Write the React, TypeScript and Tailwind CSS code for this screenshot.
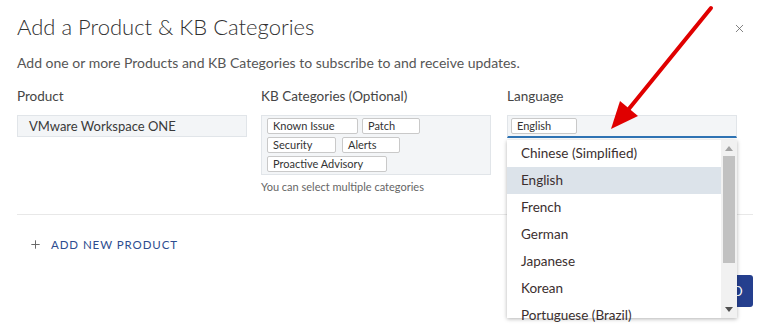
import { X, Plus } from 'lucide-react';

const categories = [
  ['Known Issue', 'w-[91px]'],
  ['Patch', 'w-[58px]'],
];

const languages = [
  'Chinese (Simplified)',
  'English',
  'French',
  'German',
  'Japanese',
  'Korean',
  'Portuguese (Brazil)',
];

function Tag({ label, className }: { label: string; className: string }) {
  return (
    <span className={`h-[16px] px-[5px] leading-[14px] text-[11px] text-[#333] bg-white border border-[#c9c9c9] rounded-[2px] ${className}`}>
      {label}
    </span>
  );
}

export default function App() {
  return (
    <div className="relative w-[771px] h-[328px] overflow-hidden bg-white text-[#333]" style={{ fontFamily: 'Lato, "Open Sans", sans-serif' }}>
      {/* Header */}
      <div className="flex items-start justify-between pl-[17px] pr-[25px] pt-[13px]">
        <h2 className="text-[22px] font-light leading-[28px] text-[#313131]">Add a Product &amp; KB Categories</h2>
        <X size={13} strokeWidth={1.5} className="mt-[9px] text-[#666]" />
      </div>

      <div className="px-[17px] pr-[18px]">
        <p className="mt-[13px] text-[14px] leading-[18px] text-[#565656]">
          Add one or more Products and KB Categories to subscribe to and receive updates.
        </p>

        {/* Fields */}
        <div className="mt-[15px] grid grid-cols-[244px_246px_230px]">
          <div>
            <div className="text-[13.5px] leading-[18px] text-[#454545]">Product</div>
            <div className="mt-[10px] w-[230px] h-[22px] px-[11px] bg-[#f3f5f7] border border-[#e1e5e9] text-[13px] leading-[20px] text-[#3a3a3a]">
              VMware Workspace ONE
            </div>
          </div>

          <div>
            <div className="text-[13.5px] leading-[18px] text-[#454545]">KB Categories (Optional)</div>
            <div className="mt-[10px] w-[230px] h-[60px] pl-[5px] pt-[2px] bg-[#f3f5f7] border border-[#e1e5e9] flex flex-col gap-[3px]">
              <div className="flex gap-[4px]">
                {categories.map(([l, w]) => (
                  <Tag key={l} label={l} className={w} />
                ))}
              </div>
              <div className="flex gap-[6px]">
                <Tag label="Security" className="w-[69px]" />
                <Tag label="Alerts" className="w-[58px]" />
              </div>
              <div className="flex">
                <Tag label="Proactive Advisory" className="w-[120px]" />
              </div>
            </div>
            <div className="mt-[5px] text-[11px] leading-[14px] text-[#666]">You can select multiple categories</div>
          </div>

          <div className="relative">
            <div className="text-[13.5px] leading-[18px] text-[#454545]">Language</div>
            <div className="mt-[10px] w-[230px] h-[23px] pl-[3px] pt-[2px] flex items-start bg-[#f3f5f7] border border-[#e1e5e9] border-b-[2px] border-b-[#2f74b5]">
              <Tag label="English" className="w-[66px]" />
            </div>

            {/* Open dropdown */}
            <div className="absolute left-0 top-[53px] z-10 w-[230px] h-[178px] bg-white shadow-[0_1px_4px_rgba(0,0,0,0.3)] flex">
              <div className="flex-1">
                {languages.map((lang) => (
                  <div
                    key={lang}
                    className={`h-[27px] pl-[14px] text-[13.5px] leading-[27px] text-[#3b2f2f] ${lang === 'English' ? 'bg-[#dce3ea]' : ''}`}
                  >
                    {lang}
                  </div>
                ))}
              </div>
              <div className="w-[16px] bg-[#f1f1f1] flex flex-col items-center">
                <svg width="8" height="5" viewBox="0 0 8 5" className="mt-[6px]">
                  <path d="M0 5 L4 0 L8 5 Z" fill="#a3a3a3" />
                </svg>
                <div className="mt-[5px] w-[12px] h-[107px] bg-[#c1c1c1]" />
                <div className="flex-1" />
                <svg width="8" height="5" viewBox="0 0 8 5" className="mb-[6px]">
                  <path d="M0 0 L8 0 L4 5 Z" fill="#505050" />
                </svg>
              </div>
            </div>
          </div>
        </div>

        <div className="mt-[20px] border-t border-[#e8e8e8]" />

        <button className="mt-[21px] ml-[12px] flex items-center gap-[9px] text-[11.5px] tracking-[0.08em] text-[#2d4c8f]">
          <Plus size={13} strokeWidth={1.8} className="text-[#666]" />
          ADD NEW PRODUCT
        </button>

        <div className="mt-[22px] flex justify-end">
          <button className="h-[32px] w-[80px] pl-[39px] rounded-[3px] bg-[#253f8e] text-white text-[13px] tracking-[0.08em] text-left">ADD</button>
        </div>
      </div>

      {/* Red annotation arrow */}
      <svg className="absolute left-0 top-0 z-20 pointer-events-none" width="771" height="328">
        <line x1="711" y1="8" x2="628" y2="110" stroke="#e00000" strokeWidth="4" strokeLinecap="round" />
        <path d="M611 129 L620 101 L638 116 Z" fill="#e00000" />
      </svg>
    </div>
  );
}
